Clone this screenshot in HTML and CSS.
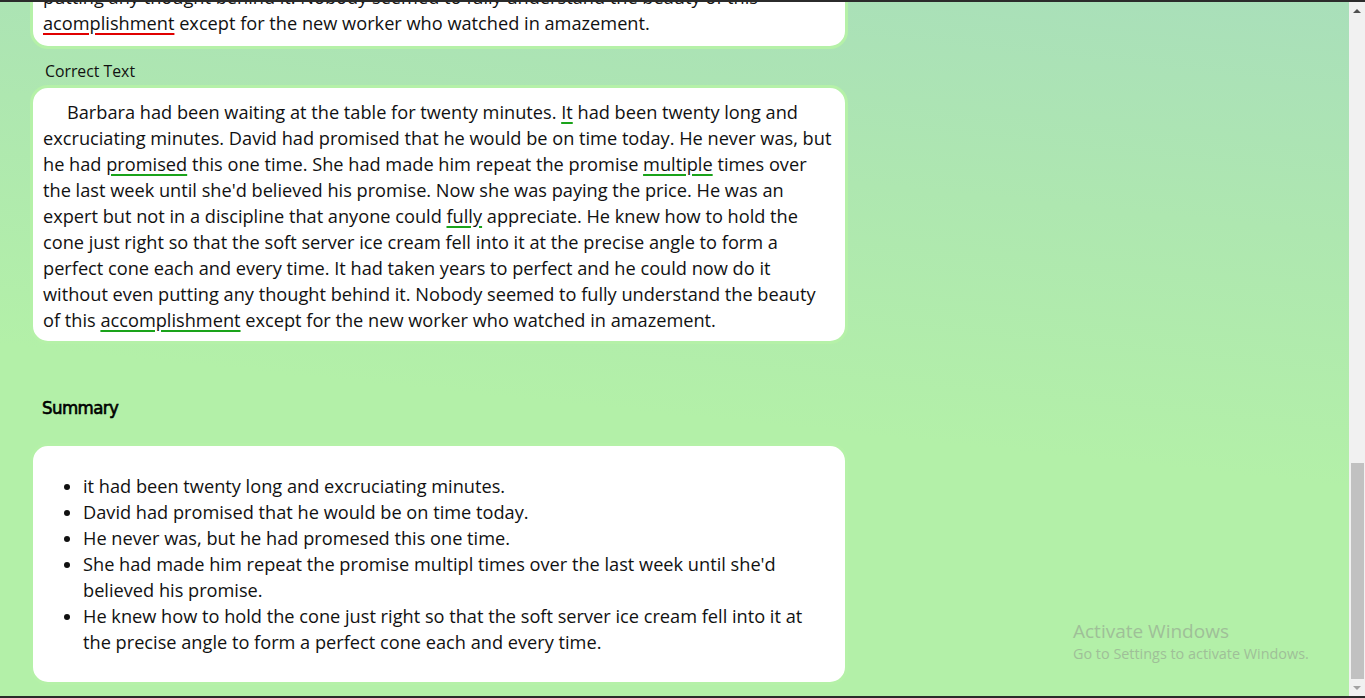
FILE: index.html
```html
<!DOCTYPE html>
<html lang="en">
<head>
<meta charset="utf-8">
<title>Text Correction</title>
<link rel="stylesheet" href="styles.css">
</head>
<body>
<div class="frame-edge"></div>
<div class="window">
  <main class="page">
    <section class="card card-text card-original">
      <p class="para">Barbara had been waiting at the table for twenty minutes. <span class="err">it</span> had been twenty long and excruciating minutes. David had promised that he would be on time today. He never was, but he had <span class="err">promesed</span> this one time. She had made him repeat the promise <span class="err">multipl</span> times over the last week until she'd believed his promise. Now she was paying the price. He was an expert but not in a discipline that anyone could <span class="err">fuly</span> appreciate. He knew how to hold the cone just right so that the soft server ice cream fell into it at the precise angle to form a perfect cone each and every time. It had taken years to perfect and he could now do it without even putting any thought behind it. Nobody seemed to fully understand the beauty of this <span class="err">acomplishment</span> except for the new worker who watched in amazement.</p>
    </section>

    <div class="label">Correct Text</div>

    <section class="card card-text">
      <p class="para indent">Barbara had been waiting at the table for twenty minutes. <span class="fix">It</span> had been twenty long and excruciating minutes. David had promised that he would be on time today. He never was, but he had <span class="fix">promised</span> this one time. She had made him repeat the promise <span class="fix">multiple</span> times over the last week until she'd believed his promise. Now she was paying the price. He was an expert but not in a discipline that anyone could <span class="fix">fully</span> appreciate. He knew how to hold the cone just right so that the soft server ice cream fell into it at the precise angle to form a perfect cone each and every time. It had taken years to perfect and he could now do it without even putting any thought behind it. Nobody seemed to fully understand the beauty of this <span class="fix">accomplishment</span> except for the new worker who watched in amazement.</p>
    </section>

    <h2 class="heading">Summary</h2>

    <section class="card card-list">
      <ul class="summary">
        <li>it had been twenty long and excruciating minutes.</li>
        <li>David had promised that he would be on time today.</li>
        <li>He never was, but he had promesed this one time.</li>
        <li>She had made him repeat the promise multipl times over the last week until she'd believed his promise.</li>
        <li>He knew how to hold the cone just right so that the soft server ice cream fell into it at the precise angle to form a perfect cone each and every time.</li>
      </ul>
    </section>

    <div class="watermark">
      <div class="wm-title">Activate Windows</div>
      <div class="wm-sub">Go to Settings to activate Windows.</div>
    </div>
  </main>
  <div class="scrollbar">
    <div class="sb-btn"><span class="arrow-up"></span></div>
    <div class="sb-track"><div class="sb-thumb"></div></div>
    <div class="sb-btn"><span class="arrow-down"></span></div>
  </div>
</div>
<div class="frame-edge"></div>
</body>
</html>
```

FILE: styles.css
```css
* { box-sizing: border-box; }

html, body {
  margin: 0;
  padding: 0;
}

body {
  height: 698px;
  overflow: hidden;
  display: flex;
  flex-direction: column;
  background: #2b2b2b;
  font-family: "Open Sans", Lato, sans-serif;
  color: #111;
}

.frame-edge {
  flex: none;
  height: 2px;
  background: #2b2b2b;
}

.window {
  flex: 1;
  min-height: 0;
  display: flex;
}

.page {
  flex: 1;
  position: relative;
  overflow: hidden;
  display: flex;
  flex-direction: column;
  justify-content: flex-end;
  align-items: flex-start;
  padding: 0 0 11px 30px;
  background: linear-gradient(186deg, #a9dfba 0%, #aee7b0 28%, #b3f0a8 58%, #b3f0a8 100%);
}

.card {
  flex: none;
  width: 818px;
  background: #fff;
  border: 3px solid #b5f1a8;
  border-radius: 18px;
  font-size: 18.2px;
  line-height: 26px;
}

.card-text {
  padding: 11px 10px 8px;
}

.card-original {
  padding-bottom: 10px;
}

.card-list {
  padding: 10px 10px 9px;
}

.para {
  margin: 0;
}

.indent {
  text-indent: 24px;
}

.err {
  text-decoration: underline;
  text-decoration-color: #e00000;
  text-decoration-thickness: 2px;
  text-underline-offset: 3px;
}

.fix {
  text-decoration: underline;
  text-decoration-color: #1aa31a;
  text-decoration-thickness: 2px;
  text-underline-offset: 3px;
}

.label {
  flex: none;
  margin: 11px 0 3px;
  padding-left: 15px;
  font-size: 15.8px;
  line-height: 22px;
}

.heading {
  flex: none;
  margin: 52px 0 23px;
  padding-left: 12px;
  font-family: "DejaVu Sans Condensed", "DejaVu Sans", sans-serif;
  font-stretch: condensed;
  font-weight: 400;
  font-size: 18.5px;
  letter-spacing: -0.6px;
  line-height: 24px;
  -webkit-text-stroke: 0.6px #000;
  color: #000;
}

.summary {
  margin: 17px 0 18px;
  padding: 0 4px 0 40px;
}

.watermark {
  position: absolute;
  left: 1073px;
  top: 617px;
  color: #9fbf98;
}

.wm-title {
  font-size: 19px;
  line-height: 24px;
}

.wm-sub {
  font-size: 14.4px;
  line-height: 21px;
}

.scrollbar {
  flex: none;
  width: 16px;
  display: flex;
  flex-direction: column;
  background: #f1f1f1;
}

.sb-btn {
  flex: none;
  height: 17px;
  display: flex;
  align-items: center;
  justify-content: center;
}

.arrow-up {
  width: 0;
  height: 0;
  border-left: 4px solid transparent;
  border-right: 4px solid transparent;
  border-bottom: 4px solid #505050;
}

.arrow-down {
  width: 0;
  height: 0;
  border-left: 4px solid transparent;
  border-right: 4px solid transparent;
  border-top: 4px solid #a3a3a3;
}

.sb-track {
  flex: 1;
  display: flex;
  flex-direction: column;
  justify-content: flex-end;
  padding: 0 1px 0 2px;
}

.sb-thumb {
  height: 216px;
  background: #c1c1c1;
}
```
